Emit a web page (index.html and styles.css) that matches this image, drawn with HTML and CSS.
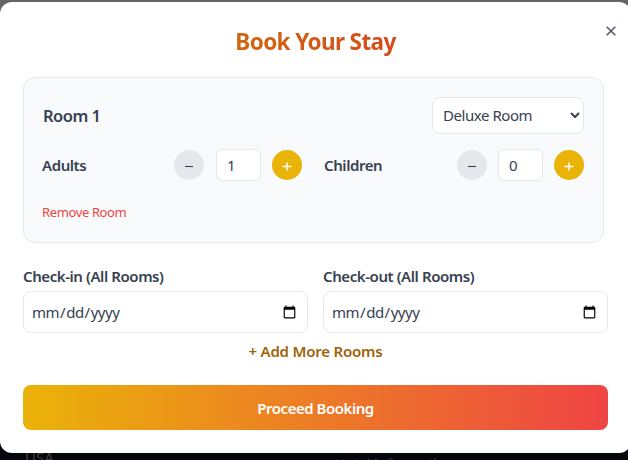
FILE: index.html
```html
<!DOCTYPE html>
<html lang="en">
<head>
<meta charset="utf-8">
<title>Book Your Stay</title>
<link rel="stylesheet" href="styles.css">
</head>
<body>
<footer class="page-footer"><span>USA</span><span class="footer-title">Hotel Information</span></footer>
<main class="modal">
  <button class="close" aria-label="Close"><svg width="10" height="10" viewBox="0 0 10 10"><path d="M.7.7 9.3 9.3M9.3.7.7 9.3"/></svg></button>
  <h1 class="title"><span>Book Your Stay</span></h1>
  <section class="card">
    <div class="card-head">
      <h2 class="room-name">Room 1</h2>
      <select class="room-type"><option>Deluxe Room</option></select>
    </div>
    <div class="guests">
      <div class="guest">
        <span class="label">Adults</span>
        <div class="stepper stepper-wide">
          <button class="round"><svg width="10" height="10" viewBox="0 0 10 10"><path d="M1 6.5h8"/></svg></button>
          <input class="count" value="1">
          <button class="round plus"><svg width="10" height="10" viewBox="0 0 10 10"><path d="M.5 6.5h9M5 2.5v8"/></svg></button>
        </div>
      </div>
      <div class="guest">
        <span class="label">Children</span>
        <div class="stepper">
          <button class="round"><svg width="10" height="10" viewBox="0 0 10 10"><path d="M1 6.5h8"/></svg></button>
          <input class="count" value="0">
          <button class="round plus"><svg width="10" height="10" viewBox="0 0 10 10"><path d="M.5 6.5h9M5 2.5v8"/></svg></button>
        </div>
      </div>
    </div>
    <button class="remove">Remove Room</button>
  </section>
  <div class="dates">
    <label class="field"><span class="label">Check-in (All Rooms)</span><input class="date" type="date"></label>
    <label class="field"><span class="label">Check-out (All Rooms)</span><input class="date" type="date"></label>
  </div>
  <button class="add">+ Add More Rooms</button>
  <button class="submit">Proceed Booking</button>
</main>
</body>
</html>
```
FILE: styles.css
```css
* { box-sizing: border-box; }
html, body { margin: 0; height: 460px; overflow: hidden; }
body {
  background: linear-gradient(#666465 0 200px, #05070c 200px);
  padding-top: 2px;
  font: 15px/22px "Segoe UI", "Noto Sans", sans-serif;
  color: #374151;
}
button, input, select { font: inherit; color: inherit; margin: 0; }
button { border: 0; padding: 0; background: none; }
svg { display: block; fill: none; stroke: currentColor; stroke-width: 1.1; overflow: visible; }
.modal {
  position: relative;
  width: 631px;
  height: 451px;
  padding: 23px;
  background: #fff;
  border-radius: 12px;
  display: flex;
  flex-direction: column;
}
.close { position: absolute; left: 606px; top: 24px; color: #4b5563; }
.close svg { stroke-width: 1.5; }
.title {
  margin: 0 0 20px;
  padding-top: 2px;
  font-size: 22.5px;
  line-height: 30px;
  font-weight: 700;
  text-align: center;
  letter-spacing: -.62px;
  background: linear-gradient(90deg, #ca8a04, #dc2626);
  -webkit-background-clip: text;
  background-clip: text;
  color: transparent;
}
.card { width: 581px; height: 166px; padding: 19px 19px 0 18px; border: 1px solid #e5e7eb; border-radius: 12px; background: #f9fafb; }
.card-head { display: flex; justify-content: space-between; align-items: center; height: 37px; }
.room-name { margin: 0; padding-left: 1px; font-size: 16.5px; font-weight: 600; letter-spacing: -.5px; }
.room-type { width: 152px; height: 37px; padding: 0 0 2px 6px; border: 1px solid #e5e7eb; border-radius: 8px; background: #fff; letter-spacing: -.45px; }
.guests { display: grid; grid-template-columns: 1fr 1fr; gap: 22px; margin-top: 15px; }
.guest { display: flex; justify-content: space-between; align-items: center; }
.label { font-weight: 600; letter-spacing: -.42px; }
.stepper { display: flex; align-items: center; gap: 11px; }
.stepper-wide .round:first-child { margin-right: 1px; }
.round { width: 30px; height: 30px; border-radius: 50%; background: #e5e7eb; display: grid; place-items: center; }
.plus { background: #eab308; color: #fff; }
.plus svg { stroke-width: 1.4; }
.count { width: 45px; height: 32px; padding: 0 10px; border: 1px solid #e5e7eb; border-radius: 6px; background: #fff; }
.remove { display: block; margin-top: 21px; font-size: 13px; line-height: 20px; color: #ef4444; letter-spacing: -.37px; }
.dates { display: grid; grid-template-columns: 1fr 1fr; gap: 15px; margin-top: 22px; }
.field { display: flex; flex-direction: column; gap: 4px; }
.date { height: 42px; width: 100%; padding: 0 8px 0 7px; border: 1px solid #e5e7eb; border-radius: 8px; background: #fff; letter-spacing: -.5px; }
.add { align-self: center; margin-top: 7px; font-weight: 600; color: #a16207; letter-spacing: -.2px; }
.submit { height: 45px; margin-top: 23px; border-radius: 8px; color: #fff; font-weight: 600; letter-spacing: -.48px; background: linear-gradient(90deg, #eab308, #ef4444); }
.page-footer { position: absolute; left: 25px; top: 446px; display: flex; color: #3c3d40; white-space: nowrap; }
.footer-title { position: absolute; left: 309px; top: 6px; font-size: 15px; letter-spacing: -.4px; color: #303136; }
```
